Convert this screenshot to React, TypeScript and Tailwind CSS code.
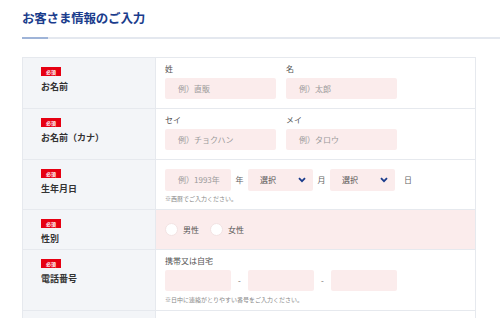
const font = { fontFamily: '"Noto Sans CJK JP", "Noto Sans", sans-serif' }

function Badge() {
  return (
    <div className="w-[20px] h-[9px] bg-[#e60012] flex items-center justify-center">
      <span className="text-[5px] leading-none font-bold text-white">必須</span>
    </div>
  )
}

function Head({ label }: { label: string }) {
  return (
    <div className="bg-[#f3f5f8] pl-[18px] pt-[9px] border-r border-[#e6e9ee]">
      <Badge />
      <div className="mt-[5px] text-[9px] leading-[12px] font-bold text-[#333]">{label}</div>
    </div>
  )
}

function Field({ ph, w = "w-[111px]" }: { ph?: string; w?: string }) {
  return (
    <div className={`${w} h-[21px] bg-[#fbecec] rounded-[2px] flex items-center pl-[13px] text-[8px] text-[#9a9a9a]`}>
      {ph}
    </div>
  )
}

function Select() {
  return (
    <div className="w-[65px] h-[22px] bg-[#fbecec] rounded-[2px] flex items-center justify-between pl-[12px] pr-[7px] text-[8px] text-[#555]">
      <span>選択</span>
      <svg width="8" height="6" viewBox="0 0 8 6" fill="none">
        <path d="M1 1.2 L4 4.2 L7 1.2" stroke="#1a3c8c" strokeWidth="1.8" />
      </svg>
    </div>
  )
}

function Sep({ t }: { t: string }) {
  return <span className="w-[17px] text-center text-[8px] text-[#666]">{t}</span>
}

function Radio({ label }: { label: string }) {
  return (
    <div className="flex items-center gap-[5px]">
      <div className="w-[13px] h-[13px] rounded-full bg-white border border-[#f3e3e3]" />
      <span className="text-[8px] text-[#555]">{label}</span>
    </div>
  )
}

export default function App() {
  return (
    <div className="w-[500px] h-[318px] overflow-hidden bg-white px-[22px] pt-[9px]" style={font}>
      <h1 className="text-[12.5px] leading-[18px] font-bold text-[#1a3c8c] tracking-[-0.2px]">お客さま情報のご入力</h1>
      <div className="flex mt-[10px] mr-[-22px]">
        <div className="w-[26px] h-[2px] bg-[#9fb4d8]" />
        <div className="flex-1 h-[2px] bg-[#e4e8ef]" />
      </div>

      <div className="mt-[18px] w-[454px] border border-[#e6e9ee] text-[#555]">
        <div className="grid grid-cols-[133px_1fr] border-b border-[#e6e9ee] h-[51px]">
          <Head label="お名前" />
          <div className="pl-[9px] pt-[6px] flex gap-[10px]">
            <div>
              <div className="text-[8px] leading-[10px] mb-[4px]">姓</div>
              <Field ph="例）直販" />
            </div>
            <div>
              <div className="text-[8px] leading-[10px] mb-[4px]">名</div>
              <Field ph="例）太郎" />
            </div>
          </div>
        </div>

        <div className="grid grid-cols-[133px_1fr] border-b border-[#e6e9ee] h-[51px]">
          <Head label="お名前（カナ）" />
          <div className="pl-[9px] pt-[6px] flex gap-[10px]">
            <div>
              <div className="text-[8px] leading-[10px] mb-[4px]">セイ</div>
              <Field ph="例）チョクハン" />
            </div>
            <div>
              <div className="text-[8px] leading-[10px] mb-[4px]">メイ</div>
              <Field ph="例）タロウ" />
            </div>
          </div>
        </div>

        <div className="grid grid-cols-[133px_1fr] border-b border-[#e6e9ee] h-[50px]">
          <Head label="生年月日" />
          <div className="pl-[9px] pt-[9px]">
            <div className="flex items-center">
              <div className="w-[66px] h-[22px] bg-[#fbecec] rounded-[2px] flex items-center pl-[13px] text-[8px] text-[#9a9a9a]">
                例）1993年
              </div>
              <Sep t="年" />
              <Select />
              <Sep t="月" />
              <Select />
              <span className="pl-[9px] text-[8px] text-[#666]">日</span>
            </div>
            <div className="mt-[4px] text-[6px] leading-[8px] text-[#888]">※西暦でご入力ください。</div>
          </div>
        </div>

        <div className="grid grid-cols-[133px_1fr] border-b border-[#e6e9ee] h-[40px]">
          <Head label="性別" />
          <div className="bg-[#fbecec] pl-[9px] flex items-center gap-[11px]">
            <Radio label="男性" />
            <Radio label="女性" />
          </div>
        </div>

        <div className="grid grid-cols-[133px_1fr] border-b border-[#e6e9ee] h-[61px]">
          <Head label="電話番号" />
          <div className="pl-[9px] pt-[6px]">
            <div className="text-[8px] leading-[10px] mb-[4px]">携帯又は自宅</div>
            <div className="flex items-center">
              <Field w="w-[66px]" />
              <Sep t="-" />
              <Field w="w-[66px]" />
              <Sep t="-" />
              <Field w="w-[66px]" />
            </div>
            <div className="mt-[5px] text-[6px] leading-[8px] text-[#888]">※日中に連絡がとりやすい番号をご入力ください。</div>
          </div>
        </div>

        <div className="grid grid-cols-[133px_1fr] h-[51px]">
          <div className="bg-[#f3f5f8] border-r border-[#e6e9ee]" />
          <div />
        </div>
      </div>
    </div>
  )
}
